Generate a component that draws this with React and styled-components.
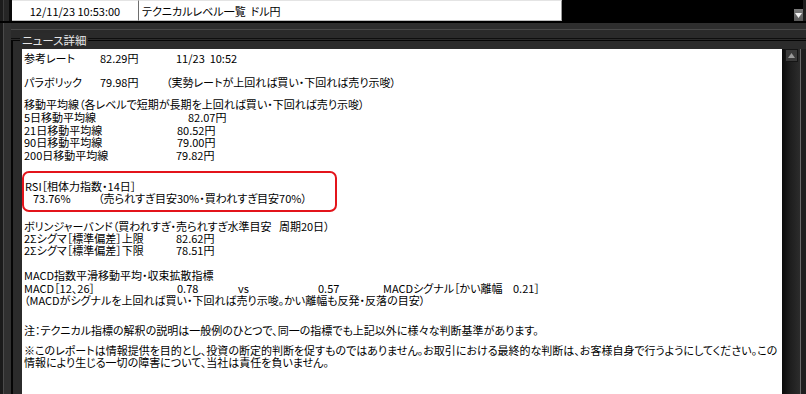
import React from "react";
import styled, { createGlobalStyle } from "styled-components";

const Global = createGlobalStyle`
  html, body { margin: 0; padding: 0; background: #000; overflow: hidden; }
  #root { width: 806px; height: 394px; }
`;

const FONT = `"Noto Sans CJK JP", "Noto Sans", sans-serif`;

const Frame = styled.div`
  width: 806px;
  height: 394px;
  display: flex;
  flex-direction: column;
  overflow: hidden;
  font-family: ${FONT};
  font-feature-settings: "palt";
  font-size: 11px;
  color: #000;
`;

const TopBar = styled.div`
  height: 21px;
  display: flex;
  background: #000;
`;

const TopEdge = styled.div`
  width: 12px;
  background: linear-gradient(to right, #1c1c1c 0 3px, #3c3c3c 3px 4px, #262626 4px 9px, #0a0a0a 9px 12px);
`;

const HeadCell = styled.div`
  width: ${(p) => p.$w}px;
  box-sizing: border-box;
  background: #fff;
  border-top: 1px solid #e4e4e4;
  border-bottom: 1px solid #bdbdbd;
  border-right: 1px solid ${(p) => p.$edge || "#9a9a9a"};
  display: flex;
  align-items: center;
  justify-content: ${(p) => (p.$center ? "center" : "flex-start")};
  padding-left: ${(p) => (p.$center ? 0 : 3)}px;
  line-height: 20px;
  white-space: nowrap;
`;

const TopSpacer = styled.div`
  flex: 1;
`;

const DropButton = styled.div`
  width: 9px;
  height: 12px;
  margin-top: 9px;
  background: linear-gradient(#7a7a7a, #5a5a5a);
  display: flex;
  align-items: center;
  justify-content: center;
`;

const TopTail = styled.div`
  width: 3px;
  background: #1e1e1e;
`;

const Body = styled.div`
  flex: 1;
  display: flex;
  border-top: 2px solid #000;
  background: linear-gradient(to bottom, #2e2e2e 0 6px, #4a4a4a 6px 7px, #2a2a2a 7px 15px, #0e0e0e 15px 16px, #2b2b2b 16px);
  min-height: 0;
`;

const LeftRail = styled.div`
  width: 11px;
  background: linear-gradient(to right, #1a1a1a 0 3px, #4a4a4a 3px 4px, #303030 4px 11px);
`;

const GroupArea = styled.div`
  flex: 1;
  display: flex;
  flex-direction: column;
  padding-top: 17px;
  min-width: 0;
`;

const Group = styled.div`
  position: relative;
  flex: 1;
  display: flex;
  border-top: 1px solid #050505;
  border-left: 2px solid #050505;
  padding: 8px 0 0 9px;
  min-height: 0;
`;

const GroupLabel = styled.span`
  position: absolute;
  left: 7px;
  top: -8px;
  padding: 0 2px;
  background: #2b2b2b;
  color: #e6e6e6;
  font-size: 11.5px;
  line-height: 14px;
`;

const TextArea = styled.div`
  flex: 1;
  background: #fff;
  padding: 3px 0 0 2px;
  overflow: hidden;
`;

const ScrollBar = styled.div`
  width: 18px;
  background: linear-gradient(to right, #0a0a0a, #1c1c1c 40%, #2c2c2c);
  display: flex;
  justify-content: flex-start;
  align-items: flex-start;
  padding-left: 3px;
  box-sizing: border-box;
`;

const UpButton = styled.div`
  width: 13px;
  height: 13px;
  box-sizing: border-box;
  border: 1px solid #151515;
  background: #3a3a3a;
  display: flex;
  align-items: center;
  justify-content: center;
`;

const RightEdge = styled.div`
  width: 6px;
  background: linear-gradient(to right, #6a6a6a 0 1px, #1e1e1e 1px);
`;

const Line = styled.div`
  display: flex;
  height: 12px;
  line-height: 12px;
  margin-top: ${(p) => p.$mt || 0}px;
  white-space: nowrap;
`;

const Cell = styled.span`
  display: inline-block;
  width: ${(p) => (p.$w ? `${p.$w}px` : "auto")};
  flex: none;
`;

const RsiBox = styled.div`
  width: 315px;
  box-sizing: border-box;
  margin: 10px 0 0 -2px;
  border: 2px solid #e3141b;
  border-radius: 7px;
  padding: 7px 0 6px 1px;
`;

const Tri = ({ down, color }) => (
  <svg width="7" height="5" viewBox="0 0 7 5">
    <polygon points={down ? "0,0 7,0 3.5,5" : "0,5 7,5 3.5,0"} fill={color} />
  </svg>
);

export default function App() {
  return (
    <>
      <Global />
      <Frame>
        <TopBar>
          <TopEdge />
          <HeadCell $w={127} $center $edge="#6e6e6e">12/11/23 10:53:00</HeadCell>
          <HeadCell $w={423}>テクニカルレベル一覧&nbsp;&nbsp;ドル円</HeadCell>
          <TopSpacer />
          <DropButton>
            <Tri down color="#f2f2f2" />
          </DropButton>
          <TopTail />
        </TopBar>
        <Body>
          <LeftRail />
          <GroupArea>
            <Group>
              <GroupLabel>ニュース詳細</GroupLabel>
              <TextArea>
                <Line>
                  <Cell $w={76}>参考レート</Cell>
                  <Cell $w={76}>82.29円</Cell>
                  <Cell>11/23&nbsp;&nbsp;10:52</Cell>
                </Line>
                <Line $mt={11.5}>
                  <Cell $w={76}>パラボリック</Cell>
                  <Cell $w={66}>79.98円</Cell>
                  <Cell>（実勢レートが上回れば買い・下回れば売り示唆）</Cell>
                </Line>
                <Line $mt={10.5}>移動平均線（各レベルで短期が長期を上回れば買い・下回れば売り示唆）</Line>
                <Line $mt={1}>
                  <Cell $w={164}>5日移動平均線</Cell>
                  <Cell>82.07円</Cell>
                </Line>
                <Line $mt={0.5}>
                  <Cell $w={153}>21日移動平均線</Cell>
                  <Cell>80.52円</Cell>
                </Line>
                <Line $mt={0.5}>
                  <Cell $w={153}>90日移動平均線</Cell>
                  <Cell>79.00円</Cell>
                </Line>
                <Line $mt={0.5}>
                  <Cell $w={152}>200日移動平均線</Cell>
                  <Cell>79.82円</Cell>
                </Line>
                <RsiBox>
                  <Line>RSI［相体力指数・14日］</Line>
                  <Line $mt={0.5}>
                    <Cell $w={8} />
                    <Cell $w={65}>73.76%</Cell>
                    <Cell>（売られすぎ目安30%・買われすぎ目安70%）</Cell>
                  </Line>
                </RsiBox>
                <Line $mt={7.5}>ボリンジャーバンド（買われすぎ・売られすぎ水準目安&nbsp;&nbsp;&nbsp;周期20日）</Line>
                <Line>
                  <Cell $w={152}>2Σシグマ［標準偏差］上限</Cell>
                  <Cell>82.62円</Cell>
                </Line>
                <Line $mt={0.5}>
                  <Cell $w={152}>2Σシグマ［標準偏差］下限</Cell>
                  <Cell>78.51円</Cell>
                </Line>
                <Line $mt={12.5}>MACD指数平滑移動平均・収束拡散指標</Line>
                <Line $mt={1}>
                  <Cell $w={153}>MACD［12、26］</Cell>
                  <Cell $w={61}>0.78</Cell>
                  <Cell $w={80}>vs</Cell>
                  <Cell $w={65}>0.57</Cell>
                  <Cell $w={130}>MACDシグナル［かい離幅</Cell>
                  <Cell>0.21］</Cell>
                </Line>
                <Line>（MACDがシグナルを上回れば買い・下回れば売り示唆。かい離幅も反発・反落の目安）</Line>
                <Line $mt={18}>注：テクニカル指標の解釈の説明は一般例のひとつで、同一の指標でも上記以外に様々な判断基準があります。</Line>
                <Line $mt={8}>※このレポートは情報提供を目的とし、投資の断定的判断を促すものではありません。お取引における最終的な判断は、お客様自身で行うようにしてください。この</Line>
                <Line>情報により生じる一切の障害について、当社は責任を負いません。</Line>
              </TextArea>
              <ScrollBar>
                <UpButton>
                  <Tri color="#9a9a9a" />
                </UpButton>
              </ScrollBar>
              <RightEdge />
            </Group>
          </GroupArea>
        </Body>
      </Frame>
    </>
  );
}
